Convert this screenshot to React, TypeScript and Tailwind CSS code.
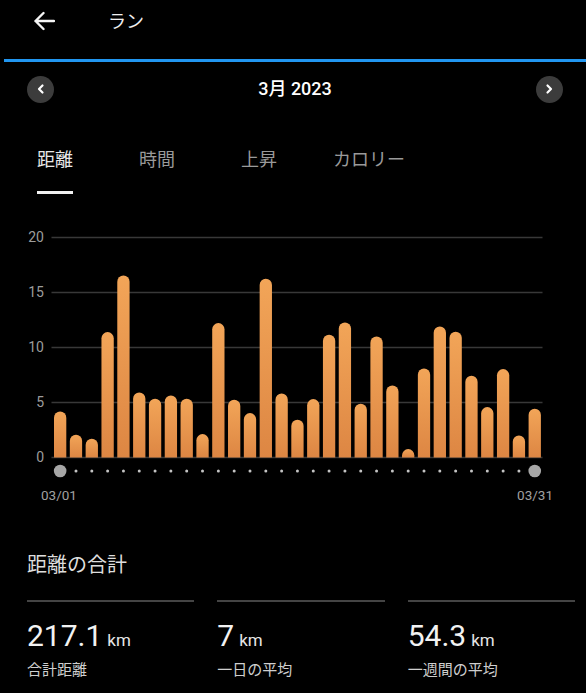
import React from "react";

const bars = [46, 22.7, 18.7, 125.4, 182, 65, 58.7, 62, 58.7, 23.4, 134.4, 57.7, 44.4, 178.7, 64, 37.7, 58.4, 122.7, 135, 53.7, 121, 72, 8.4, 89, 131, 125.7, 81.7, 50.4, 88.4, 22, 48.7];

const PITCH = 15.82;
const BW = 12.3;
const BASE = 227.5;

function Chart() {
  const r = BW / 2;
  return (
    <svg width="492" height="250" viewBox="0 0 492 250" className="block">
      <defs>
        <linearGradient id="bar" x1="0" y1="0" x2="0" y2="1">
          <stop offset="0" stopColor="#f2a558" />
          <stop offset="1" stopColor="#dd8643" />
        </linearGradient>
      </defs>
      {[0, 1, 2, 3, 4].map((k) => (
        <rect key={k} x="0.5" y={BASE - k * 55 - 0.75} width="491" height="1.5" fill="#383838" />
      ))}
      {bars.map((h, i) => {
        const x = 3 + i * PITCH;
        const top = BASE - h;
        const d = `M${x},${BASE} V${top + r} A${r},${r} 0 0 1 ${x + BW},${top + r} V${BASE} Z`;
        return <path key={i} d={d} fill="url(#bar)" />;
      })}
      {bars.map((_, i) => {
        const cx = 3 + i * PITCH + BW / 2;
        if (i === 0 || i === bars.length - 1) {
          return <circle key={i} cx={cx} cy={241} r={6.3} fill="#a6a6a6" />;
        }
        return <circle key={i} cx={cx} cy={241} r={1.5} fill="#c4c4c4" />;
      })}
    </svg>
  );
}

function Chevron({ dir }: { dir: "left" | "right" }) {
  return (
    <svg width="10" height="12" viewBox="0 0 10 12">
      {dir === "left" ? (
        <path d="M6.5 2.5 L3 6 L6.5 9.5" stroke="#fff" strokeWidth="2.2" fill="none" strokeLinecap="round" strokeLinejoin="round" />
      ) : (
        <path d="M3.5 2.5 L7 6 L3.5 9.5" stroke="#fff" strokeWidth="2.2" fill="none" strokeLinecap="round" strokeLinejoin="round" />
      )}
    </svg>
  );
}

function Stat({ value, label }: { value: string; label: string }) {
  return (
    <div className="flex flex-col">
      <div className="h-[2px] bg-[#444444]" />
      <div className="mt-[16px] flex items-baseline h-[36px] leading-[36px]">
        <span className="text-[30px] text-[#f2f2f2]">{value}</span>
        <span className="ml-[5px] text-[17px] text-[#e6e6e6]">km</span>
      </div>
      <div className="mt-[6px] h-[20px] leading-[20px] text-[15px] text-[#cfcfcf]">{label}</div>
    </div>
  );
}

export default function App() {
  const tabs = [
    { t: "距離", active: true, ml: "" },
    { t: "時間", active: false, ml: "ml-[66px]" },
    { t: "上昇", active: false, ml: "ml-[66px]" },
    { t: "カロリー", active: false, ml: "ml-[56px]" },
  ];
  return (
    <div
      className="w-[586px] h-[693px] bg-black overflow-hidden"
      style={{ fontFamily: 'Roboto, "Noto Sans CJK JP", sans-serif' }}
    >
      {/* header */}
      <div className="h-[42px] flex items-center">
        <svg className="ml-[33px]" width="22" height="20" viewBox="0 0 22 20">
          <path d="M21 10 H2.5 M10.5 2 L2.5 10 L10.5 18" stroke="#f5f5f5" strokeWidth="2.4" fill="none" strokeLinecap="round" strokeLinejoin="round" />
        </svg>
        <span className="ml-[53px] mt-[1px] text-[18px] leading-[24px] text-[#f0f0f0]">ラン</span>
      </div>
      <div className="mt-[17px] ml-[4px] h-[3px] bg-[#2196f0]" />

      {/* month nav */}
      <div className="h-[54px] flex items-center justify-between pl-[27px] pr-[23px]">
        <div className="w-[27px] h-[27px] rounded-full bg-[#3c3c3c] flex items-center justify-center">
          <Chevron dir="left" />
        </div>
        <span className="text-[18px] font-medium text-white leading-[24px]">3月 2023</span>
        <div className="w-[27px] h-[27px] rounded-full bg-[#3c3c3c] flex items-center justify-center">
          <Chevron dir="right" />
        </div>
      </div>

      {/* tabs */}
      <div className="mt-[32px] flex pl-[37px]">
        {tabs.map((tab) => (
          <div key={tab.t} className={`flex flex-col ${tab.ml}`}>
            <span
              className={`text-[18px] leading-[24px] ${tab.active ? "text-[#e8e8e8]" : "text-[#9a9a9a]"}`}
            >
              {tab.t}
            </span>
            <div className={`mt-[19px] h-[3px] ${tab.active ? "bg-[#f0f0f0]" : "bg-transparent"}`} />
          </div>
        ))}
      </div>

      {/* chart */}
      <div className="mt-[35px] flex">
        <div className="w-[44px] flex flex-col gap-[39px] items-end">
          {["20", "15", "10", "5", "0"].map((l) => (
            <span key={l} className="h-[16px] leading-[16px] text-[14px] text-[#9c9c9c]">
              {l}
            </span>
          ))}
        </div>
        <div className="ml-[7px] mt-[1px]">
          <Chart />
        </div>
      </div>
      <div className="mt-[7px] flex justify-between pl-[41px] pr-[33px] h-[16px] leading-[16px] text-[13.5px] text-[#a0a0a0]">
        <span>03/01</span>
        <span>03/31</span>
      </div>

      {/* summary */}
      <div className="mt-[48px] pl-[27px] h-[28px] leading-[28px] text-[20px] text-[#dedede]">距離の合計</div>
      <div className="mt-[21px] pl-[27px] pr-[11px] grid grid-cols-3 gap-[23px]">
        <Stat value="217.1" label="合計距離" />
        <Stat value="7" label="一日の平均" />
        <Stat value="54.3" label="一週間の平均" />
      </div>
    </div>
  );
}
